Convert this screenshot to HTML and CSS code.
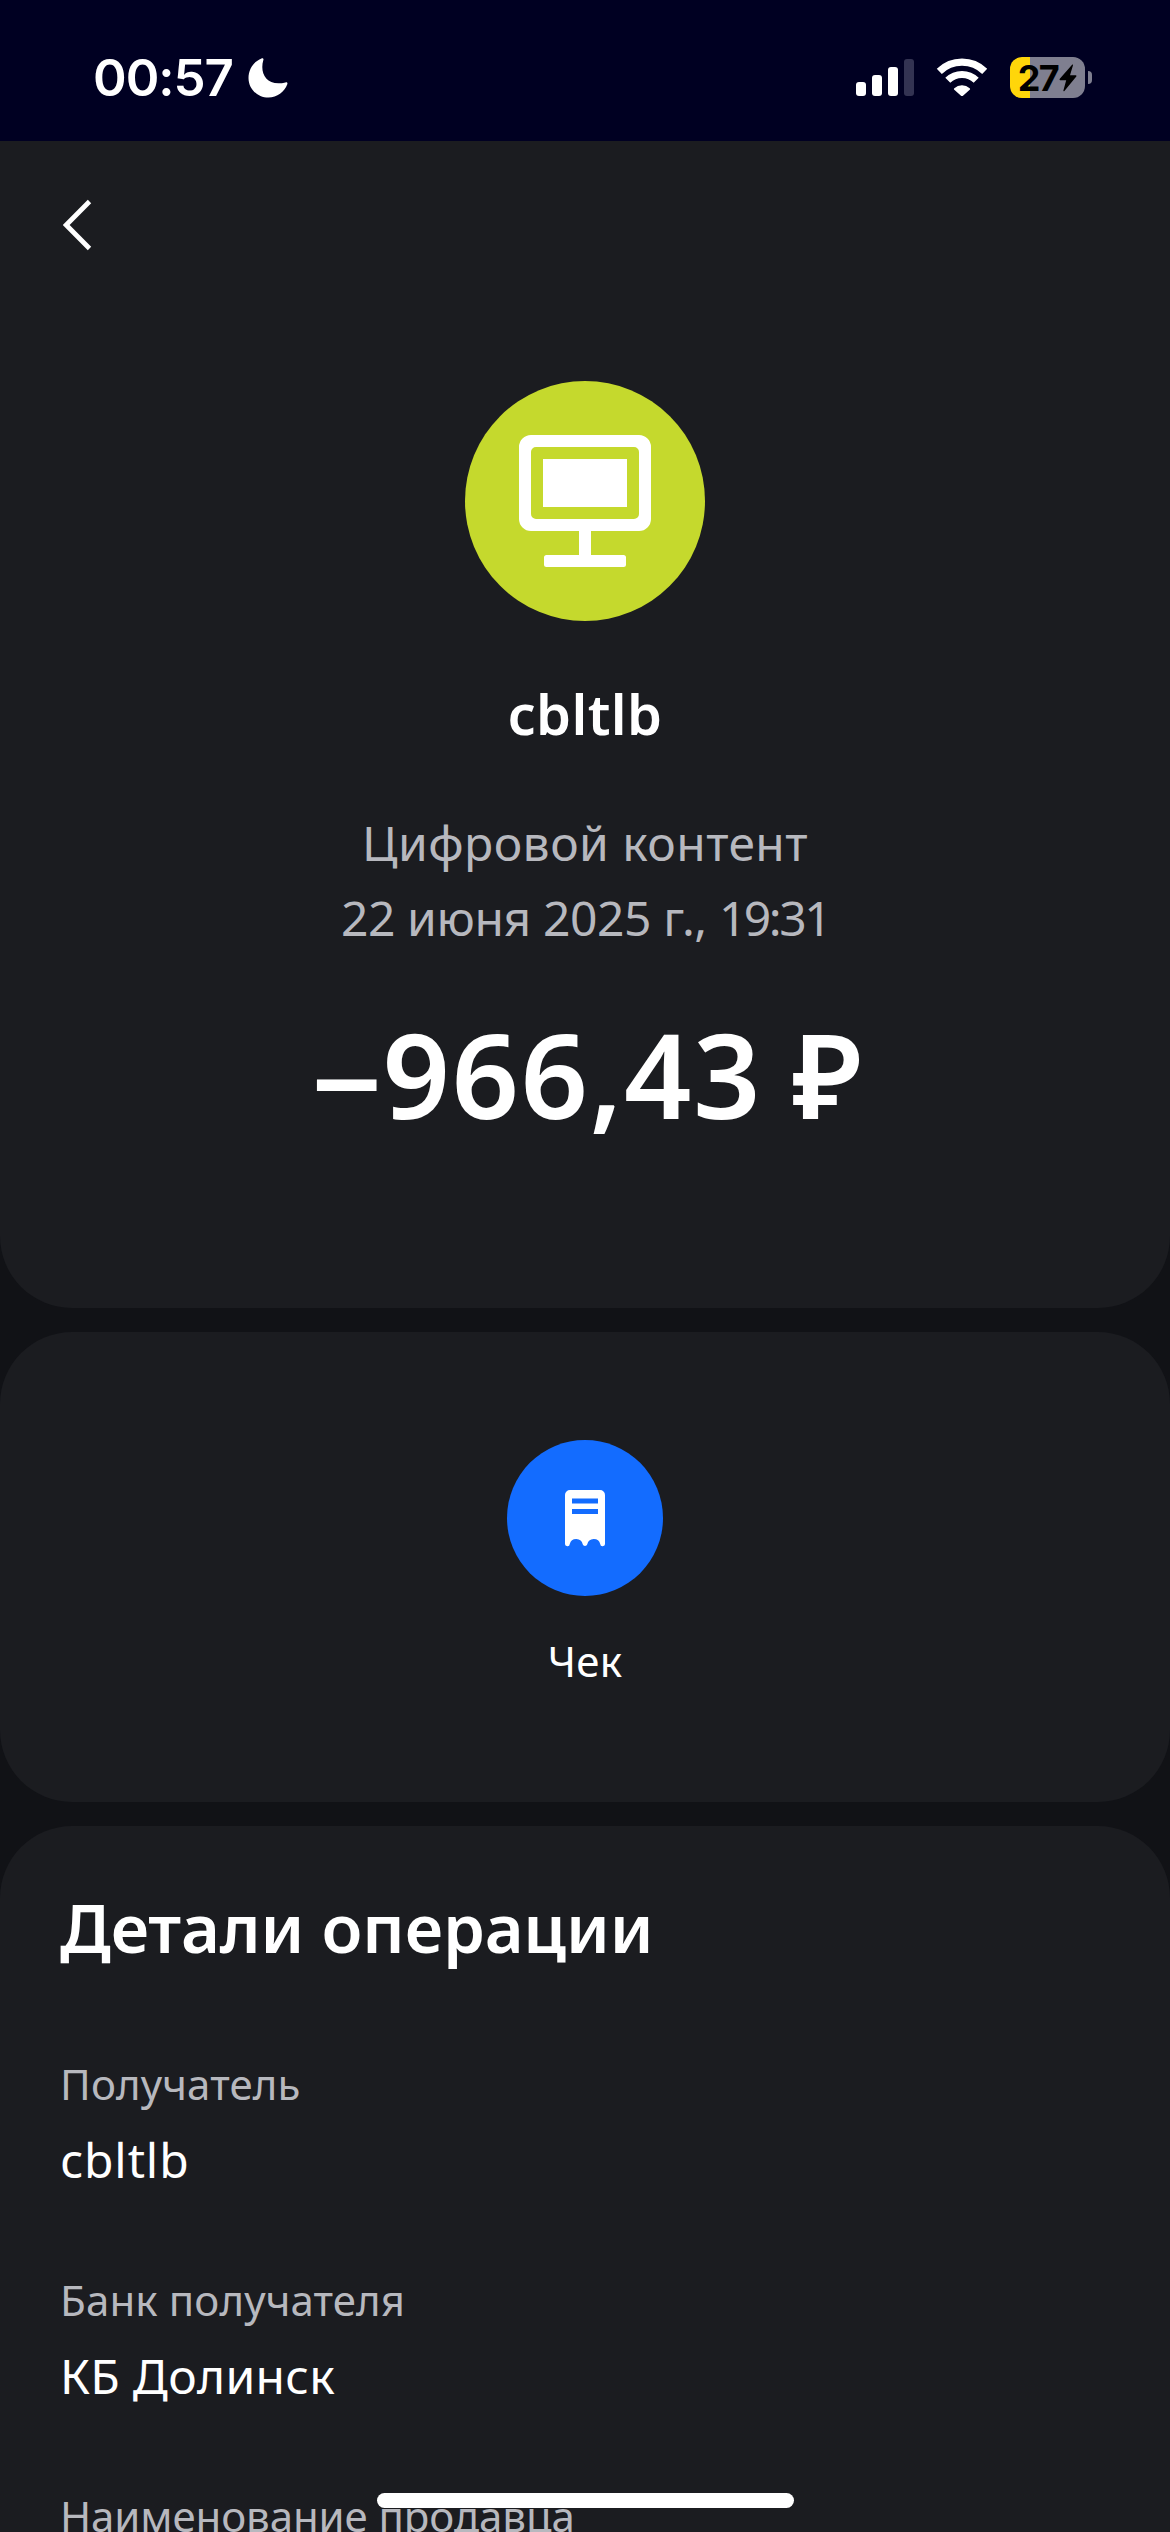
FILE: index.html
```html
<!DOCTYPE html>
<html lang="ru">
<head>
<meta charset="utf-8">
<title>Детали операции</title>
<link rel="stylesheet" href="styles.css">
</head>
<body>
<div class="screen">
  <header class="status">
    <div class="status-left">
      <span class="clock">00:57</span>
      <svg class="moon" width="40" height="40" viewBox="0 0 40 40"><path d="M13.500.4C15 0 15.900 1 15.300 2.300C11.500 15 18.500 29 37.500 24.400C39 24 39.800 25 39.300 26.300C36.500 34 29 39.600 20.500 39.600C9.500 39.600.5 31 .5 20C.5 11 6 3.300 13.500.4Z" fill="#fff"/></svg>
    </div>
    <div class="status-right">
      <svg class="signal" width="58" height="38" viewBox="0 0 58 38"><g fill="#fff"><rect x="0" y="23" width="10" height="14" rx="3"/><rect x="16" y="16" width="10" height="21" rx="3"/><rect x="32" y="8" width="10" height="29" rx="3"/></g><rect x="48" y="0" width="10" height="37" rx="3" fill="#333352"/></svg>
      <svg class="wifi" width="52" height="38" viewBox="0 0 52 38"><g fill="none" stroke="#fff" stroke-width="7.200"><path d="M3.300 13.400a32.500 32.500 0 0 1 45.400 0"/><path d="M11.800 22.300a20.300 20.300 0 0 1 28.400 0"/></g><path d="M18.300 30.200a11.500 11.500 0 0 1 15.400 0q.8.800 0 1.600l-6.700 6q-1 .8-2 0l-6.700-6q-.8-.8 0-1.600z" fill="#fff"/></svg>
      <div class="battery">
        <div class="battery-body"><span class="battery-level">27</span><svg width="18" height="28" viewBox="0 0 18 28"><path d="M13.300.5Q14.200.2 14 1.300L11 11.300H16.800Q18 11.500 17.300 12.600L5.400 27Q4.300 27.800 4.400 26.500L7.200 16.200H1.200Q0 16 .8 14.800Z" fill="#000"/></svg></div>
        <div class="battery-tip"></div>
      </div>
    </div>
  </header>

  <main class="cards">
    <section class="card summary">
      <nav class="nav"><svg width="30" height="52" viewBox="0 0 30 52"><path d="M26.500 2.500L3.200 26L26.500 49.500" fill="none" stroke="#fff" stroke-width="4.800"/></svg></nav>
      <svg class="avatar" width="240" height="240" viewBox="0 0 240 240"><circle cx="120" cy="120" r="120" fill="#c5d92d"/><path fill="#fff" fill-rule="evenodd" d="M66 54H174a12 12 0 0 1 12 12V138a12 12 0 0 1-12 12H126V174H158.500a2.500 2.500 0 0 1 2.500 2.500V183.500a2.500 2.500 0 0 1-2.500 2.500H81.500a2.500 2.500 0 0 1-2.500-2.500V176.500a2.500 2.500 0 0 1 2.500-2.500H114V150H66a12 12 0 0 1-12-12V66a12 12 0 0 1 12-12ZM71 66a5 5 0 0 0-5 5V133a5 5 0 0 0 5 5H169a5 5 0 0 0 5-5V71a5 5 0 0 0-5-5ZM78 78H162V126H78Z"/></svg>
      <h1 class="name">cbltlb</h1>
      <p class="meta category">Цифровой контент</p>
      <p class="meta date">22 июня 2025 г., <span class="time">19:31</span></p>
      <p class="amount"><span class="minus">−</span>966,43 <span class="currency">₽</span></p>
    </section>

    <section class="card actions">
      <svg width="156" height="156" viewBox="0 0 156 156"><circle cx="78" cy="78" r="78" fill="#136cff"/><path d="M63 50H93a5 5 0 0 1 5 5V103.500a2.400 2.400 0 0 1-4.800.5a6.600 6.600 0 0 0-12.900.300a2.400 2.400 0 0 1-4.600 0a6.600 6.600 0 0 0-12.900-.300a2.400 2.400 0 0 1-4.800-.5V55a5 5 0 0 1 5-5Z" fill="#fff"/><path d="M65 58.500H91V63.500H65ZM65 69H91V74H65Z" fill="#136cff"/></svg>
      <span class="action-label">Чек</span>
    </section>

    <section class="card details">
      <h2 class="title">Детали операции</h2>
      <dl class="rows">
        <div class="row"><dt>Получатель</dt><dd class="recipient">cbltlb</dd></div>
        <div class="row"><dt>Банк получателя</dt><dd>КБ Долинск</dd></div>
        <div class="row"><dt class="seller">Наименование продавца</dt></div>
      </dl>
    </section>
  </main>
  <div class="home-bar"></div>
</div>
</body>
</html>
```
FILE: styles.css
```css
* { box-sizing: border-box; }
body, h1, h2, p, dl, dd { margin: 0; }
body { background: #111216; color: #fff; font-family: "Noto Sans", sans-serif; }
.screen { position: relative; width: 1170px; height: 2532px; overflow: hidden; }

.status { display: flex; justify-content: space-between; align-items: flex-start; height: 141px; padding: 57px 78px 0 93px; background: #000022; }
.status-left, .status-right { display: flex; align-items: flex-start; }
.clock { height: 40px; font: 600 51px/41px Inter, sans-serif; letter-spacing: -1px; }
.moon { margin: 1px 0 0 15px; }
.signal { margin: 2px 0 0; }
.wifi { margin: 1px 0 0 22px; }
.battery { display: flex; align-items: center; margin-left: 22px; }
.battery-body { display: flex; align-items: center; justify-content: center; gap: 1px; width: 75px; height: 41px; border-radius: 12px; background: linear-gradient(90deg, #ffd60a 20px, #7f7f90 20px); }
.battery-level { color: #000; font: 700 36px/42px Inter, sans-serif; letter-spacing: -1.500px; }
.battery-tip { width: 4px; height: 13px; margin-left: 3px; border-radius: 0 6px 6px 0; background: #7f7f90; }

.cards { display: flex; flex-direction: column; gap: 24px; }
.card { background: #1b1c20; }
.summary { display: flex; flex-direction: column; align-items: center; height: 1167px; border-radius: 0 0 72px 72px; }
.nav { align-self: stretch; height: 240px; padding: 58px 0 0 63px; }
.avatar { flex: none; }
.name { margin-top: 56px; font-size: 56px; font-weight: 600; line-height: 72px; letter-spacing: 0.400px; }
.meta { color: #b7b8be; font-size: 48px; line-height: 75px; }
.category { margin-top: 56px; letter-spacing: 0.450px; }
.date { letter-spacing: -0.400px; }
.time { letter-spacing: -2.500px; }
.amount { margin-top: 49px; font-size: 118px; font-weight: 650; line-height: 140px; letter-spacing: 1.500px; white-space: nowrap; }
.minus { font-size: 124px; line-height: 0; vertical-align: -10px; letter-spacing: 0; }
.currency { margin-left: -2px; letter-spacing: -3px; }

.actions { display: flex; flex-direction: column; align-items: center; height: 470px; padding-top: 108px; border-radius: 72px; }
.action-label { margin-top: 37px; font-size: 42px; line-height: 56px; letter-spacing: 0.300px; }

.details { height: 706px; padding: 61px 60px 0; border-radius: 72px 72px 0 0; }
.title { font-size: 67px; font-weight: 600; line-height: 80px; letter-spacing: -0.100px; }
.rows { display: flex; flex-direction: column; gap: 74px; margin-top: 87px; }
.row { display: flex; flex-direction: column; gap: 10px; }
dt { color: #b7b8be; font-size: 42px; line-height: 60px; letter-spacing: 0.120px; }
dd { font-size: 48px; line-height: 72px; letter-spacing: 0.300px; }
.seller { letter-spacing: -0.100px; }
.recipient { letter-spacing: 0.900px; }

.home-bar { position: absolute; left: 377px; top: 2493px; width: 417px; height: 15px; border-radius: 8px; background: #fff; }
```
